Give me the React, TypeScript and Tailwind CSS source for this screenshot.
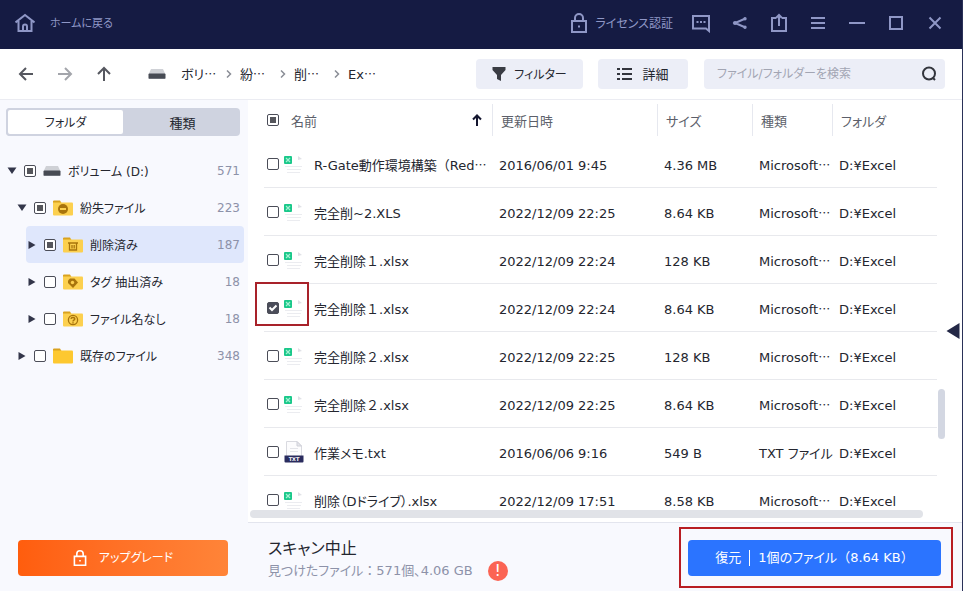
import { useState } from 'react'
import type { ReactNode } from 'react'

type CheckState = 'on' | 'off' | 'partial'

interface TreeNode {
  label: string
  count: number
  open?: boolean
  check: CheckState
  icon: 'drive' | 'minus' | 'trash' | 'tag' | 'unknown' | 'plain'
  level: 0 | 1 | 2
  active?: boolean
}

interface FileRow {
  name: string
  cut?: boolean
  kana?: boolean
  date: string
  size: string
  type: string
  txt?: boolean
}

const tree: TreeNode[] = [
  { label: 'ボリューム (D:)', count: 571, open: true, check: 'partial', icon: 'drive', level: 0 },
  { label: '紛失ファイル', count: 223, open: true, check: 'partial', icon: 'minus', level: 1 },
  { label: '削除済み', count: 187, check: 'partial', icon: 'trash', level: 2, active: true },
  { label: 'タグ 抽出済み', count: 18, check: 'off', icon: 'tag', level: 2 },
  { label: 'ファイル名なし', count: 18, check: 'off', icon: 'unknown', level: 2 },
  { label: '既存のファイル', count: 348, check: 'off', icon: 'plain', level: 1 }
]

const files: FileRow[] = [
  { name: 'R-Gate動作環境構築（Red', cut: true, date: '2016/06/01 9:45', size: '4.36 MB', type: 'Microsoft' },
  { name: '完全削~2.XLS', date: '2022/12/09 22:25', size: '8.64 KB', type: 'Microsoft' },
  { name: '完全削除１.xlsx', date: '2022/12/09 22:24', size: '128 KB', type: 'Microsoft' },
  { name: '完全削除１.xlsx', date: '2022/12/09 22:24', size: '8.64 KB', type: 'Microsoft' },
  { name: '完全削除２.xlsx', date: '2022/12/09 22:25', size: '128 KB', type: 'Microsoft' },
  { name: '完全削除２.xlsx', date: '2022/12/09 22:25', size: '8.64 KB', type: 'Microsoft' },
  { name: '作業メモ.txt', kana: true, date: '2016/06/06 9:16', size: '549 B', type: 'TXT ファイル', txt: true },
  { name: '削除（Dドライブ）.xlsx', kana: true, date: '2022/12/09 17:51', size: '8.58 KB', type: 'Microsoft' }
]

const indent = ['pl-[7px]', 'pl-[17px]', 'pl-[27px]']

// 中央揃えの三点リーダー
function Dots() {
  return <span className="font-['Noto_Sans_CJK_JP',sans-serif] text-xs leading-none">…</span>
}

// 約物を全角幅のまま表示する
function Wide({ children }: { children: ReactNode }) {
  return <span className="[font-feature-settings:normal]">{children}</span>
}

function CheckBox({ state, label, onChange }: { state: CheckState; label: string; onChange?: () => void }) {
  return (
    <span className="relative grid size-3 shrink-0 place-items-center">
      <input
        type="checkbox"
        aria-label={label}
        checked={state === 'on'}
        onChange={() => onChange?.()}
        className="size-3 appearance-none rounded-[2px] border border-[#4b4d58] bg-white checked:bg-[#4b4d5a]"
      />
      {state === 'partial' && <span className="pointer-events-none absolute size-1.5 bg-[#55565c]" />}
      {state === 'on' && (
        <svg viewBox="0 0 12 12" className="pointer-events-none absolute size-3" fill="none" stroke="#fff" strokeWidth="2">
          <path d="M2.5 5.5 5 8l4.5-4.5" />
        </svg>
      )}
    </span>
  )
}

function DriveIcon() {
  return (
    <svg width="18" height="12" viewBox="0 0 18 12" className="shrink-0">
      <path d="M3 1h12l2.5 5.5H.5z" fill="#cfd1d6" />
      <rect x=".5" y="5.5" width="17" height="5.5" rx="1" fill="#474b54" />
      <path d="M1 10.5h16" stroke="#6b6f78" />
    </svg>
  )
}

function FolderIcon({ kind }: { kind: TreeNode['icon'] }) {
  if (kind === 'drive') return <DriveIcon />
  return (
    <svg width="20" height="16" viewBox="0 0 20 16" className="shrink-0">
      <path d="M0 1.5A1 1 0 0 1 1 .5h6l1.5 2.5H0z" fill="#d9a21f" />
      <path d="M0 2.5h19a1 1 0 0 1 1 1v11a1 1 0 0 1-1 1H1a1 1 0 0 1-1-1z" fill={kind === 'plain' ? '#fdc830' : '#fcd04f'} />
      {kind === 'minus' && (
        <>
          <circle cx="10" cy="9" r="5" fill="#a8740c" />
          <path d="M7 9h6" stroke="#fcd04f" strokeWidth="2" />
        </>
      )}
      {kind === 'trash' && (
        <g stroke="#a8740c" fill="none" strokeWidth="1.3">
          <path d="M5 6h10M6.5 6.5V13h7V6.5M9 8v3.5M11.2 8v3.5" />
        </g>
      )}
      {kind === 'tag' && (
        <>
          <path d="M7 4.5h4.5L15 8.5 10 14 5 9V6.5z" fill="#a8740c" />
          <circle cx="9.5" cy="8.5" r="1.7" fill="#fcd04f" />
        </>
      )}
      {kind === 'unknown' && (
        <>
          <circle cx="10" cy="9" r="4.6" fill="none" stroke="#a8740c" strokeWidth="1.3" />
          <path d="M8 7.8c.3-2 4-1.8 3.7.3-.2 1.2-1.7 1-1.7 2.4M10 11.2v1.2" fill="none" stroke="#a8740c" strokeWidth="1.5" />
        </>
      )}
    </svg>
  )
}

function ExcelIcon() {
  return (
    <svg width="22" height="22" viewBox="0 0 22 22" className="shrink-0">
      <path d="M15 3l4 3-4 1z" fill="#e0e1e7" />
      <g stroke="#ebecf0">
        <path d="M2 13.5h17M4 16.5h14M4 19.5h13" />
      </g>
      <rect x="1" y="3" width="8" height="8" rx="1" fill="#1ac88a" />
      <path d="M3 5l4 4M7 5 3 9" stroke="#a4f0d2" strokeWidth="1.2" />
    </svg>
  )
}

function TxtIcon() {
  return (
    <svg width="22" height="22" viewBox="0 0 22 22" className="shrink-0">
      <path d="M3.5.5H14L18.5 5v11h-15z" fill="#fcfcfd" stroke="#d9dae0" />
      <path d="M14 .5V5h4.5z" fill="#e6e7ec" stroke="#cfd0d8" />
      <path d="M7 7.5h8M7 10.5h8" stroke="#e3e4e9" />
      <path d="M1.5 14.5h19v6a1 1 0 0 1-1 1h-17a1 1 0 0 1-1-1z" fill="#2a2c5e" />
      <text x="11" y="20" textAnchor="middle" fontSize="5" fontWeight="700" fill="#fff" fontFamily="DejaVu Sans, sans-serif">
        TXT
      </text>
    </svg>
  )
}

function LockIcon({ className }: { className: string }) {
  return (
    <svg viewBox="0 0 16 20" className={className} fill="none" stroke="currentColor" strokeWidth="2">
      <path d="M1 8h14v11H1zM4 8V5a4 4 0 0 1 8 0v3" />
      <path d="M7 13.5h2" />
    </svg>
  )
}

function TitleButton({ label, children }: { label: string; children: ReactNode }) {
  return (
    <button type="button" aria-label={label} className="grid h-8 w-[39px] place-items-center">
      <svg width="20" height="20" viewBox="0 0 20 20" fill="none" stroke="currentColor" strokeWidth="2">
        {children}
      </svg>
    </button>
  )
}

function ToolArrow({ label, d, className }: { label: string; d: string; className: string }) {
  return (
    <button type="button" aria-label={label} className={`grid h-8 w-[39px] place-items-center ${className}`}>
      <svg width="16" height="16" viewBox="0 0 16 16" fill="none" stroke="currentColor" strokeWidth="2">
        <path d={d} />
      </svg>
    </button>
  )
}

function Chevron() {
  return (
    <svg width="6" height="8" viewBox="0 0 6 8" fill="none" stroke="#8a8d96" strokeWidth="1.5">
      <path d="M1 .5 4.5 4 1 7.5" />
    </svg>
  )
}

function TitleBar() {
  return (
    <header className="flex h-[49px] shrink-0 items-center bg-[#151b43] pr-2 pb-[3px] pl-[15px] text-[#8f97c6]">
      <button type="button" className="flex items-center gap-[15px] text-[11px]">
        <svg width="20" height="20" viewBox="0 0 20 20" fill="none" stroke="currentColor" strokeWidth="2">
          <path d="M.5 9.5 10 2l9.5 7.5M3.5 8v10h13V8M8 18v-4.5a2 2 0 0 1 4 0V18" />
        </svg>
        <span className="pt-0.5">ホームに戻る</span>
      </button>
      <button type="button" className="ml-auto flex items-center gap-2 text-xs">
        <LockIcon className="h-5 w-4" />
        <span className="pt-0.5">ライセンス認証</span>
      </button>
      <div className="ml-2 flex">
        <TitleButton label="フィードバック">
          <path d="M2 3h16v15l-3-2.500H2zM5.500 9h2M9 9h2M12.500 9h2" />
        </TitleButton>
        <TitleButton label="共有">
          <path d="M15.5 5.5 5 10l10.5 4.5" />
          <circle cx="15" cy="5.7" r=".7" fill="currentColor" />
          <circle cx="5" cy="10" r="1" fill="currentColor" />
          <circle cx="15" cy="14.3" r=".7" fill="currentColor" />
        </TitleButton>
        <TitleButton label="エクスポート">
          <path d="M7 5H3v13h14V5h-4M10 13V2.5M7 5l3-3 3 3" />
        </TitleButton>
        <TitleButton label="メニュー">
          <path d="M3 5h14M3 10h14M3 15h14" />
        </TitleButton>
        <TitleButton label="最小化">
          <path d="M2 10h16" />
        </TitleButton>
        <TitleButton label="最大化">
          <path d="M4 4h12v12H4z" />
        </TitleButton>
        <TitleButton label="閉じる">
          <path d="m4.5 4.5 11 11M15.5 4.5l-11 11" />
        </TitleButton>
      </div>
    </header>
  )
}

function Toolbar() {
  return (
    <div className="flex h-[51px] shrink-0 items-center border-b border-[#ebecf2] bg-white pr-[17px] pl-1.5">
      <ToolArrow label="戻る" className="text-[#55575f]" d="M15 8H2M8 2 2 8l6 6" />
      <ToolArrow label="進む" className="text-[#a3a5ab]" d="M1 8h13M8 2l6 6-6 6" />
      <ToolArrow label="上へ" className="text-[#55575f]" d="M8 15V2M2 8l6-6 6 6" />
      <nav className="ml-[25px] flex items-center">
        <DriveIcon />
        <a href="#volume" className="ml-[15px] w-[45px] pt-0.5">
          ボリ
          <Dots />
        </a>
        <Chevron />
        <a href="#lost" className="ml-2 w-10 pt-0.5">
          紛
          <Dots />
        </a>
        <Chevron />
        <a href="#deleted" className="ml-2 w-10 pt-0.5">
          削
          <Dots />
        </a>
        <Chevron />
        <a href="#existing" className="ml-2 pt-0.5">
          Ex
          <Dots />
        </a>
      </nav>
      <button
        type="button"
        className="ml-auto flex h-[30px] w-[107px] items-center justify-center gap-2 rounded bg-[#eceef7] text-xs"
      >
        <svg width="14" height="14" viewBox="0 0 14 14" fill="#3a3c44">
          <path d="M.5 0h13v3L9 8v6l-4-2V8L.5 3z" />
        </svg>
        <span className="pt-0.5">フィルター</span>
      </button>
      <button type="button" className="ml-[15px] flex h-[30px] w-[90px] items-center justify-center gap-2.5 rounded bg-[#eceef7]">
        <svg width="15" height="14" viewBox="0 0 15 14" fill="none" stroke="#33353d" strokeWidth="2">
          <path d="M0 2h3M5 2h10M0 7h3M5 7h10M0 12h3M5 12h10" />
        </svg>
        <span className="pt-0.5">詳細</span>
      </button>
      <label className="ml-4 flex h-[30px] w-[241px] items-center rounded bg-[#eceef7] pr-2 pl-[13px] text-xs">
        <input
          type="search"
          aria-label="検索"
          placeholder="ファイル/フォルダーを検索"
          className="min-w-0 flex-1 bg-transparent outline-none placeholder:text-[#a2a5b3]"
        />
        <svg width="16" height="16" viewBox="0 0 16 16" fill="none" stroke="#33353d" strokeWidth="2">
          <circle cx="8" cy="7.5" r="6" />
          <path d="m11.5 11.5 2.5 2.5" />
        </svg>
      </label>
    </div>
  )
}

function Sidebar() {
  return (
    <aside className="flex w-[248px] shrink-0 flex-col bg-[#f8f9fe]">
      <div className="mt-2 mr-2 ml-1.5 flex h-7 rounded bg-[#cfd3e0]">
        <button type="button" className="flex-1 rounded border-2 border-[#cfd3e0] bg-white pt-0.5 text-xs">
          フォルダ
        </button>
        <button type="button" className="flex-1 pt-1">
          種類
        </button>
      </div>
      <ul className="mt-4">
        {tree.map((node) => (
          <li key={node.label} className="relative h-[37px]">
            {node.active && <div className="absolute inset-y-0 right-1 left-[26px] rounded bg-[#dfe7fc]" />}
            <div className={`relative flex h-full items-center pr-2 ${indent[node.level]}`}>
              <button type="button" aria-label={`${node.label}を開閉`}>
                <svg width="10" height="10" viewBox="0 0 10 10" fill="#33364a">
                  <path d={node.open ? 'M.5 1.5h9L5 8z' : 'M1.5 1 8.5 5l-7 4z'} />
                </svg>
              </button>
              <span className="mx-[7px] flex">
                <CheckBox state={node.check} label={node.label} />
              </span>
              <FolderIcon kind={node.icon} />
              <span className="ml-[7px] pt-0.5 text-xs">{node.label}</span>
              <span className="ml-auto text-xs text-[#8d92a9]">{node.count}</span>
            </div>
          </li>
        ))}
      </ul>
      <button
        type="button"
        className="mr-5 mt-auto mb-[15px] ml-[18px] flex h-9 items-center justify-center gap-3 rounded bg-linear-to-r from-[#ff5d0d] to-[#ff8438] text-xs text-white"
      >
        <LockIcon className="h-4 w-3.5" />
        アップグレード
      </button>
    </aside>
  )
}

function FileTable() {
  const [selected, setSelected] = useState<number[]>([3])

  const toggle = (i: number) =>
    setSelected((prev) => (prev.includes(i) ? prev.filter((n) => n !== i) : [...prev, i]))

  return (
    <table className="w-full table-fixed text-left whitespace-nowrap">
      <colgroup>
        <col />
        <col className="w-[165px]" />
        <col className="w-[95px]" />
        <col className="w-20" />
        <col className="w-[105px]" />
      </colgroup>
      <thead className="text-[#5c5f6a]">
        <tr className="h-[39px]">
          <th className="p-0 font-normal">
            <div className="flex items-center pr-2.5 pl-[3px]">
              <CheckBox state="partial" label="すべて選択" />
              <span className="ml-3 pt-1">名前</span>
              <svg width="10" height="12" viewBox="0 0 10 12" className="ml-auto" fill="none" stroke="#14162f" strokeWidth="2">
                <path d="M5 12V2M1 5.5l4-4 4 4" />
              </svg>
            </div>
          </th>
          {['更新日時', 'サイズ', '種類', 'フォルダ'].map((h) => (
            <th key={h} className="p-0 font-normal">
              <div className="flex h-8 items-center border-l border-[#e6e8ef] pt-1 pl-2">{h}</div>
            </th>
          ))}
        </tr>
      </thead>
      <tbody>
        {files.map((file, i) => (
          <tr key={i} className="h-12 border-b border-[#e8e9ed]">
            <td className="p-0">
              <div className="relative flex items-center pt-0.5 pl-[3px]">
                <CheckBox state={selected.includes(i) ? 'on' : 'off'} label={file.name} onChange={() => toggle(i)} />
                <span className="mr-[9px] ml-1">{file.txt ? <TxtIcon /> : <ExcelIcon />}</span>
                <span className={file.kana ? 'pt-1' : 'pt-1 [font-feature-settings:normal]'}>
                  {file.name}
                  {file.cut && <Dots />}
                </span>
                {i === 3 && (
                  <div className="pointer-events-none absolute -top-3 -left-[9px] h-11 w-[54px] border-2 border-[#a8222a]" />
                )}
              </div>
            </td>
            <td className="pt-1.5 pl-[7px]">{file.date}</td>
            <td className="pt-1.5 pl-[7px]">{file.size}</td>
            <td className="pt-1.5 pl-[7px]">
              {file.type}
              {!file.txt && <Dots />}
            </td>
            <td className="pt-1.5 pl-[7px]">D:¥Excel</td>
          </tr>
        ))}
      </tbody>
    </table>
  )
}

function Footer() {
  return (
    <footer className="flex h-[69px] shrink-0 items-center border-t border-[#e3e5ee] bg-[#f8f9fe] pr-[9px] pl-5">
      <div className="pt-1">
        <p className="text-base leading-6">スキャン中止</p>
        <p className="flex h-5 items-center text-[#8d92a9]">
          <span>
            見つけたファイル<Wide>：</Wide>571個、4.06 GB
          </span>
          <span className="ml-[15px] grid size-5 place-items-center rounded-full bg-[#fb6454] text-base leading-5 text-white">!</span>
        </p>
      </div>
      <div className="ml-auto border-2 border-[#b81d22] pt-[11px] pr-2.5 pb-2.5 pl-[7px]">
        <button type="button" className="flex h-9 w-[253px] items-center justify-center gap-2 rounded bg-[#2b74ff] text-white">
          復元
          <span className="h-4 w-px bg-white" />
          <span>
            1個のファイル<Wide>（8.64 KB）</Wide>
          </span>
        </button>
      </div>
    </footer>
  )
}

export default function App() {
  return (
    <div
      lang="ja"
      className="relative flex h-screen flex-col overflow-hidden border-r border-[#2a3158] bg-white font-['DejaVu_Sans','Noto_Sans_CJK_JP',sans-serif] text-[13px] leading-5 text-[#24262f] [font-feature-settings:'palt']"
    >
      <TitleBar />
      <Toolbar />
      <div className="flex min-h-0 flex-1">
        <Sidebar />
        <main className="flex min-w-0 flex-1 flex-col">
          <div className="relative min-h-0 flex-1 overflow-hidden pr-[25px] pl-4">
            <FileTable />
            <div className="absolute right-[17px] bottom-[83px] h-[50px] w-[7px] rounded-full bg-[#d3d7e2]" />
            <div className="absolute inset-x-0 bottom-0 h-3 bg-white pr-[39px] pl-0.5">
              <div className="h-2 rounded-full bg-[#e1e3e8]" />
            </div>
            <button type="button" aria-label="プレビューを開く" className="absolute top-[223px] right-0.5">
              <svg width="14" height="16" viewBox="0 0 14 16" fill="#232846">
                <path d="M13.5 0v16L.5 8z" />
              </svg>
            </button>
          </div>
          <Footer />
        </main>
      </div>
    </div>
  )
}
